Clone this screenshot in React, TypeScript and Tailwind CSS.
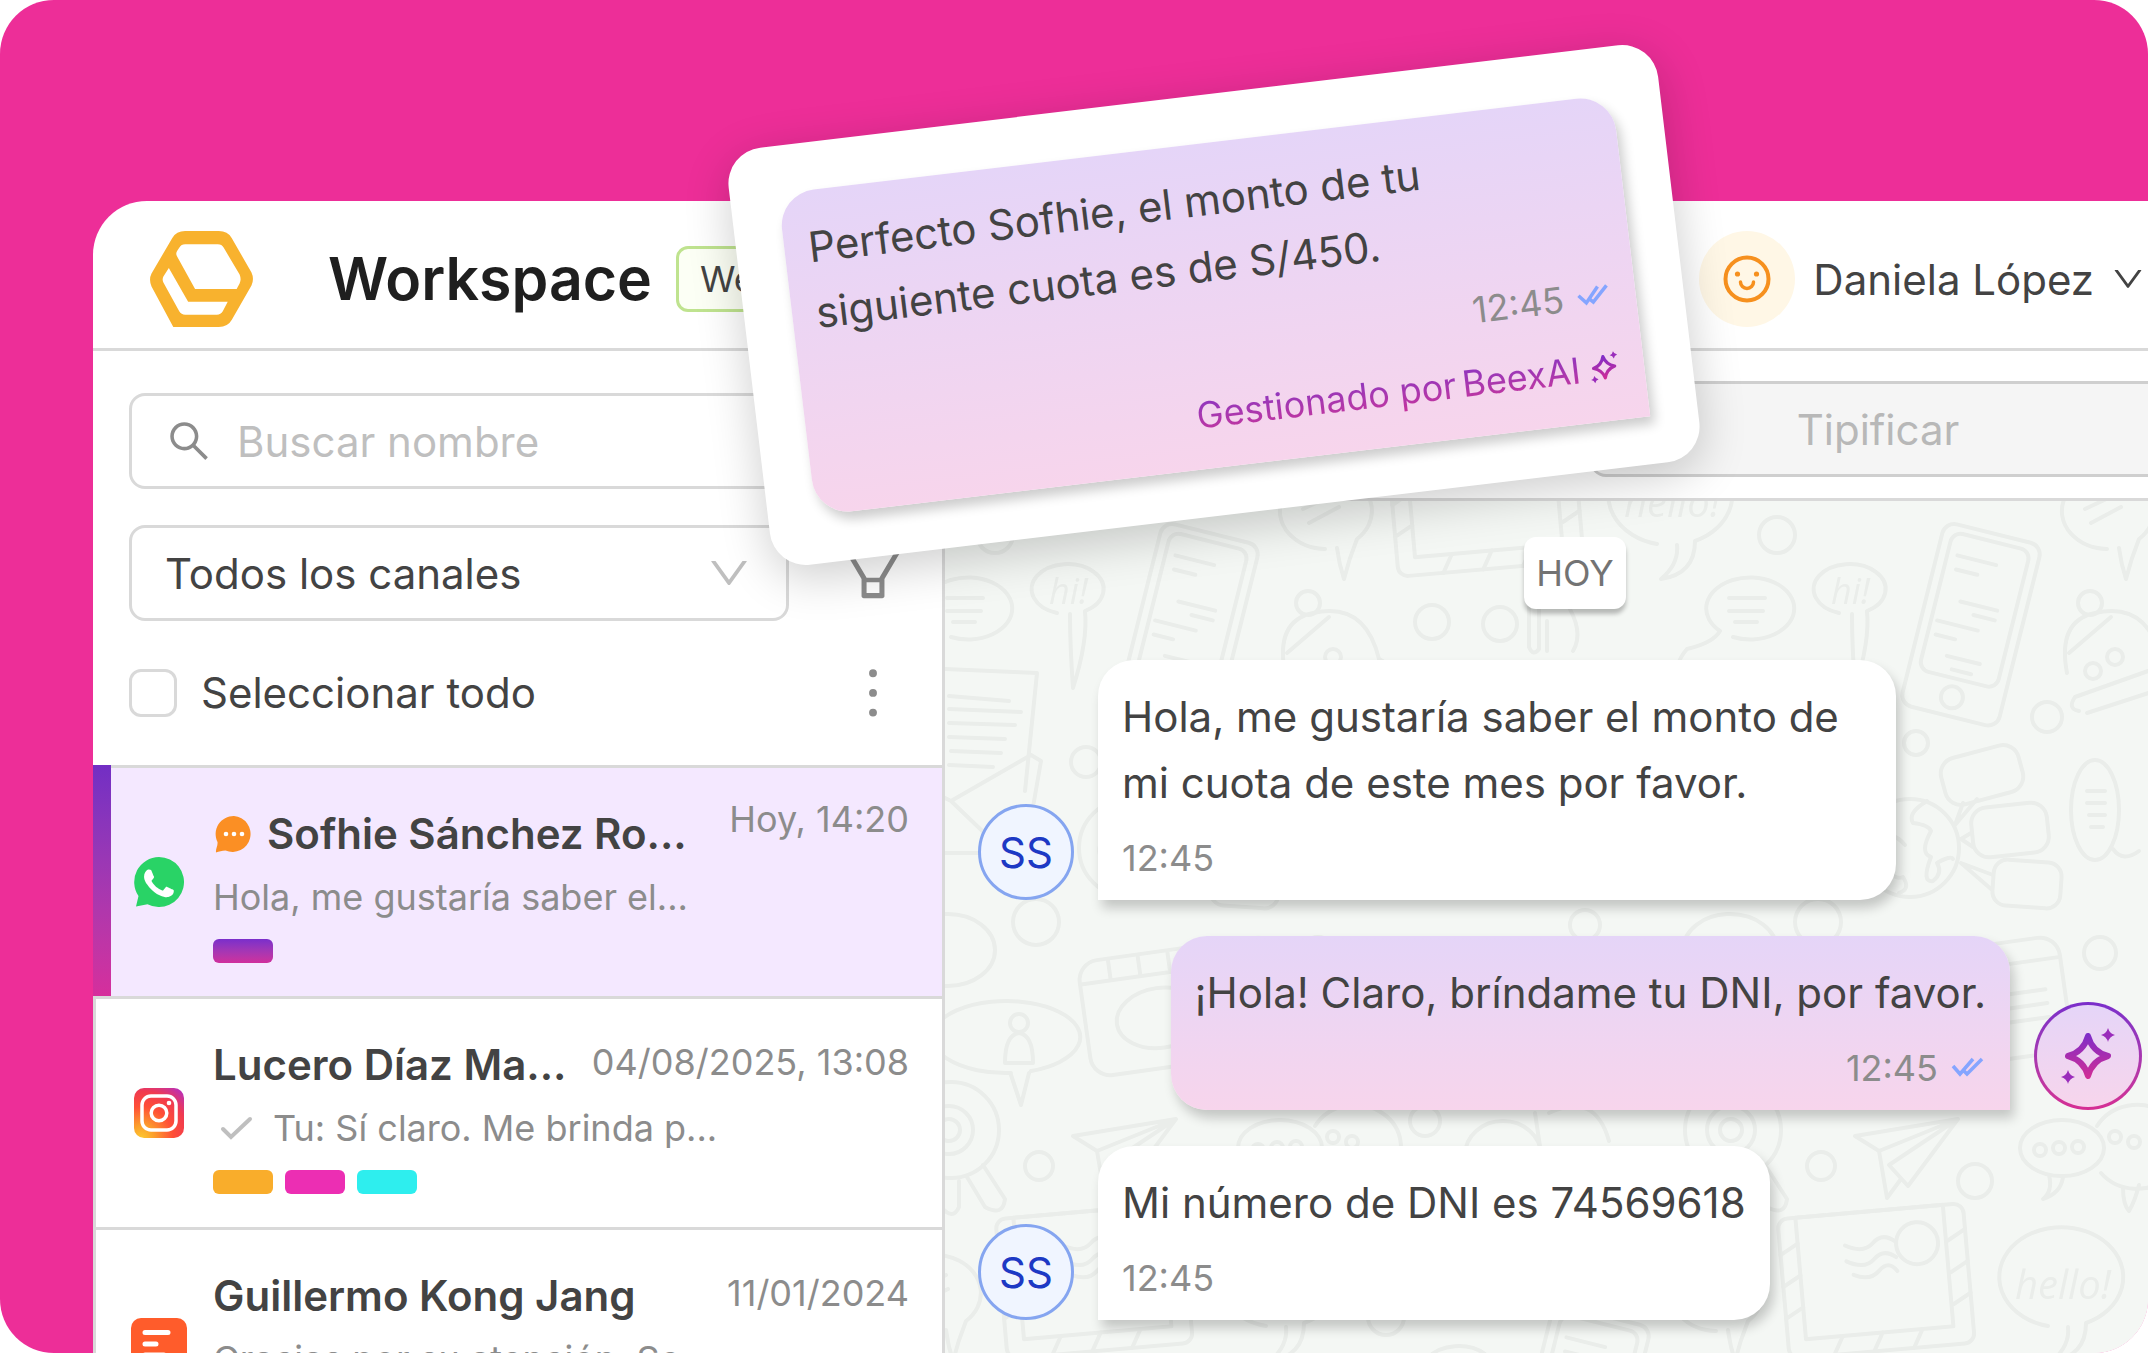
import type { ReactNode } from 'react';
import {
  AiOutlineDown,
  AiOutlineFilter,
  AiOutlineMore,
  AiOutlineSearch,
} from 'react-icons/ai';

interface Conversation {
  id: number;
  name: string;
  preview: string;
  date: string;
  channel: 'whatsapp' | 'instagram' | 'form';
  tags: string[];
  active?: boolean;
  sent?: boolean;
}

const conversations: Conversation[] = [
  {
    id: 1,
    name: 'Sofhie Sánchez Ro...',
    preview: 'Hola, me gustaría saber el...',
    date: 'Hoy, 14:20',
    channel: 'whatsapp',
    tags: ['bg-linear-to-b from-[#7a2dcb] to-[#d02e9c]'],
    active: true,
  },
  {
    id: 2,
    name: 'Lucero Díaz Ma...',
    preview: 'Tu: Sí claro. Me brinda p...',
    date: '04/08/2025, 13:08',
    channel: 'instagram',
    tags: ['bg-[#f9ad2b]', 'bg-[#ec2eb3]', 'bg-[#2eeeee]'],
    sent: true,
  },
  {
    id: 3,
    name: 'Guillermo Kong Jang',
    preview: 'Gracias por su atención. Se...',
    date: '11/01/2024',
    channel: 'form',
    tags: ['bg-[#f9ad2b]'],
  },
];

function Logo() {
  return (
    <svg viewBox="0 0 105 97" className="h-24 w-[105px] shrink-0" fill="#f8b22e">
      <path
        fillRule="evenodd"
        d="M36 0H70Q79 0 83 7L103 42Q106 48.500 103 55L83 90Q79 97 70 97H24L2 56Q-1 49 2 43L23 7Q27 0 36 0ZM36 13.500Q32 13.500 30 17L28 20Q26 23 28 26L46 58.500H88L91 53Q93 49 91 44L75 17Q73 13.500 69 13.500ZM19.500 37.500L14 46Q12.500 49 14 52L30 81Q32 84.500 36 84.500H68Q72 84.500 74 81L79 71.500H39Z"
      />
    </svg>
  );
}

function SmileIcon() {
  return (
    <svg viewBox="0 0 48 48" className="size-12" fill="none" stroke="#f6901e" strokeWidth="4" strokeLinecap="round">
      <circle cx="24" cy="24" r="21.500" />
      <path d="M17.500 27A6.500 6.500 0 0 0 30.500 27" strokeWidth="3.500" />
      <circle cx="14.500" cy="19" r="2.600" fill="#f6901e" stroke="none" />
      <circle cx="33.500" cy="19" r="2.600" fill="#f6901e" stroke="none" />
    </svg>
  );
}

function WhatsappIcon() {
  return (
    <svg viewBox="0 0 50 50" className="size-[50px]">
      <path d="M25 0a25 25 0 1 1-11.500 47.200L2 49.500 4.500 39A25 25 0 0 1 25 0Z" fill="#29d366" />
      <path
        transform="translate(-4.600 -7.400) scale(.132)"
        fill="#fff"
        d="M325.100 300.500c-5.500-2.800-32.800-16.200-37.900-18-5.100-1.900-8.800-2.800-12.500 2.800-3.700 5.600-14.300 18-17.600 21.800-3.200 3.700-6.500 4.200-12 1.400-32.600-16.300-54-29.100-75.500-66-5.700-9.800 5.700-9.100 16.300-30.300 1.800-3.700.9-6.900-.5-9.700-1.400-2.800-12.500-30.100-17.100-41.200-4.500-10.800-9.100-9.300-12.500-9.500-3.200-.2-6.900-.2-10.600-.2-3.700 0-9.700 1.400-14.800 6.900-5.100 5.600-19.400 19-19.400 46.300 0 27.300 19.900 53.700 22.600 57.400 2.800 3.700 39.100 59.700 94.800 83.800 35.200 15.200 49 16.500 66.600 13.900 10.700-1.600 32.800-13.400 37.400-26.400 4.600-13 4.600-24.100 3.200-26.400-1.300-2.500-5-3.900-10.500-6.600z"
      />
    </svg>
  );
}

function InstagramIcon() {
  return (
    <svg viewBox="0 0 50 50" className="size-[50px]" fill="none" stroke="#fff">
      <defs>
        <radialGradient id="insta" cx="0.15" cy="1" r="1.250">
          <stop offset="0" stopColor="#fdc82f" />
          <stop offset="0.2" stopColor="#fca02c" />
          <stop offset="0.5" stopColor="#ff4f36" />
          <stop offset="0.75" stopColor="#f03a50" />
          <stop offset="1" stopColor="#b72fbd" />
        </radialGradient>
      </defs>
      <rect width="50" height="50" rx="10" fill="url(#insta)" stroke="none" />
      <rect x="8" y="8" width="34" height="34" rx="9" strokeWidth="3.500" />
      <circle cx="25" cy="25" r="7.800" strokeWidth="3.500" />
      <circle cx="35" cy="15" r="2.300" fill="#fff" stroke="none" />
    </svg>
  );
}

function FormIcon() {
  return (
    <svg viewBox="0 0 56 56" className="size-14">
      <rect y="2" width="56" height="52" rx="10" fill="#ff5c2b" />
      <g stroke="#fff" strokeWidth="5" strokeLinecap="round">
        <path d="M14 16.500H37M14 28H25M14 39H33" />
      </g>
    </svg>
  );
}

function PendingIcon() {
  return (
    <svg viewBox="0 0 42 42" className="size-[42px] shrink-0">
      <path d="M21 3a18 18 0 1 1-8.500 34.500C9 37.500 6 38.500 3 39.500 2.500 36 5 33 4.500 29A18 18 0 0 1 21 3Z" fill="#fb8f24" />
      <g fill="#fff">
        <circle cx="13" cy="21" r="2.300" />
        <circle cx="21" cy="21" r="2.300" />
        <circle cx="29" cy="21" r="2.300" />
      </g>
    </svg>
  );
}

function DoubleCheck() {
  return (
    <svg viewBox="0 0 36 24" className="h-6 w-9" fill="none" stroke="#85a5ff" strokeWidth="3.500">
      <path d="M3 10L10 18 23 3M14 15L17 18 32 3" />
    </svg>
  );
}

function Sparkle({ id, className }: { id: string; className: string }) {
  return (
    <svg viewBox="0 0 60 60" className={className}>
      <defs>
        <linearGradient id={id} x1="0" y1="0" x2="0" y2="60" gradientUnits="userSpaceOnUse">
          <stop offset="0.1" stopColor="#7a2dcb" />
          <stop offset="0.9" stopColor="#d52d93" />
        </linearGradient>
      </defs>
      <path
        d="M30 10C33 21 39 27 50 30 39 33 33 39 30 50 27 39 21 33 10 30 21 27 27 21 30 10Z"
        fill="none"
        stroke={`url(#${id})`}
        strokeWidth="6"
        strokeLinejoin="round"
      />
      <path d="M50 2Q51.500 7.500 57 9 51.500 10.500 50 16 48.500 10.500 43 9 48.500 7.500 50 2Z" fill="#9a2dbb" />
      <path d="M10 44Q11.500 49.500 17 51 11.500 52.500 10 58 8.500 52.500 3 51 8.500 49.500 10 44Z" fill="#9a2dbb" />
    </svg>
  );
}

function Doodles() {
  return (
    <g fill="none" stroke="#eaedea" strokeWidth="4" strokeLinecap="round" strokeLinejoin="round">
      {/* speech bubbles */}
      <path d="M112 112A36 25 0 1 1 140 110Q143 140 128 187 125 145 125 113" />
      <path d="M775 130A44 31 0 1 1 788 136M775 130Q768 142 742 148 735 156 733 164" />
      <path d="M784 97H820M784 110H818M790 121H812" />
      <path d="M771 830A46 38 0 1 1 803 820Q795 840 790 860 785 845 783 829" />
      <path d="M749 790L783 774M755 804L785 788" />
      <path d="M321 825A62 50 0 1 1 359 822Q359 855 325 860 343 845 341 826" />
      <rect x="215" y="250" width="80" height="48" rx="16" transform="rotate(-15 255 274)" />
      <path d="M236 302L228 324 250 298" />
      <rect x="245" y="304" width="76" height="50" rx="16" transform="rotate(-6 283 329)" />
      <path d="M244 332L234 338 246 346" />
      <rect x="266" y="360" width="68" height="46" rx="14" transform="rotate(4 300 383)" />
      <path d="M266 374L234 362 264 388" />
      <ellipse cx="368" cy="309" rx="24" ry="50" />
      <path d="M360 290H378M360 302H378M362 314H378M364 326H376M386 348Q396 362 412 350" />
      <ellipse cx="785" cy="449" rx="47" ry="36" />
      <path d="M848 572A74 36 0 1 1 868 570M848 574L858 604 866 572" />
      <circle cx="856" cy="522" r="9" />
      <path d="M842 562Q842 534 856 532 870 534 870 562Z" />
      <ellipse cx="335" cy="647" rx="42" ry="28" />
      <path d="M322 674Q326 690 316 698 334 692 336 676M370 625A46 42 0 1 1 374 672M396 686Q396 704 402 710 408 700 412 684" />
      <circle cx="313" cy="649" r="6" />
      <circle cx="332" cy="647" r="6" />
      <circle cx="351" cy="646" r="6" />
      <circle cx="388" cy="636" r="6" />
      <circle cx="407" cy="641" r="6" />
      {/* phone */}
      <g transform="rotate(14 245 124)">
        <rect x="194" y="30" width="100" height="188" rx="12" />
        <rect x="204" y="38" width="80" height="142" rx="10" />
        <circle cx="243" cy="199" r="11" />
        <path d="M214 60H254M216 74H238M228 104H266M244 114H266M210 128H252M212 142H232M228 160H262M236 172H256" />
      </g>
      {/* envelopes */}
      <g transform="translate(-391 4) rotate(-5 539 774)">
        <rect x="447" y="706" width="186" height="140" rx="10" />
        <rect x="465" y="706" width="148" height="122" />
        <path d="M447 742L465 732M447 774L465 764M447 806L465 796M615 742L633 732M615 774L633 764M615 806L633 796M492 846L502 828M532 846L542 828M572 846L582 828" />
        <circle cx="584" cy="742" r="21" />
        <path d="M512 738Q530 748 540 738T562 738M512 754Q530 764 540 754T562 754M518 768Q534 776 544 766T562 768" />
      </g>
      <path d="M712 165L874 172 862 290M786 195L846 200M786 208L858 211M786 222L852 224M786 236L842 238M788 250L838 252M786 264L830 266M702 258L788 300 868 254M702 258V352H862L878 260 868 254M788 300L836 346" />
      {/* bear with a hat */}
      <path d="M340 172Q330 120 368 112 420 100 434 158 444 164 452 168M352 210Q340 208 348 196L438 164Q462 172 440 186L360 212M342 152L384 116" />
      <circle cx="363" cy="102" r="12" />
      <circle cx="366" cy="170" r="8" />
      <circle cx="388" cy="156" r="8" />
      <path d="M584 96V146Q588 156 594 148V98M602 150V120M620 100Q640 130 628 150M584 180A28 24 0 0 1 636 184" />
      {/* globe */}
      <circle cx="183" cy="347" r="49" />
      <path d="M200 300Q180 312 186 322 202 324 204 330 192 352 204 356 194 382 206 380 216 372 210 362 224 354 226 358M172 392Q184 388 176 376 166 380 160 364 150 350 158 338 166 330 178 344" />
      {/* wallet, card */}
      <g transform="rotate(-8 235 505)">
        <rect x="139" y="448" width="200" height="116" rx="20" />
        <path d="M140 470H339M170 450V468M200 450V468M230 450V468M280 500H320M280 514H320M280 528H320" />
        <ellipse cx="214" cy="514" rx="44" ry="30" />
      </g>
      {/* medal */}
      <circle cx="788" cy="629" r="48" />
      <circle cx="786" cy="629" r="24" />
      <circle cx="786" cy="629" r="11" />
      <path d="M804 676L822 706Q840 716 842 698L820 664M778 680V706Q790 720 796 706V680" />
      {/* paper plane */}
      <path d="M128 635L231 618 181 685 162 664 231 618 152 650M128 635L152 650 160 697 174 678" />
      <path d="M520 654A38 34 0 0 1 596 654M604 612Q650 590 664 640M590 612L596 652" />
      {/* loose circles */}
      <circle cx="50" cy="34" r="18" />
      <circle cx="487" cy="121" r="17" />
      <circle cx="555" cy="123" r="17" />
      <circle cx="320" cy="216" r="15" />
      <circle cx="189" cy="242" r="12" />
      <circle cx="141" cy="261" r="15" />
      <circle cx="91" cy="421" r="23" />
      <circle cx="94" cy="665" r="14" />
      <circle cx="248" cy="680" r="17" />
      <circle cx="373" cy="452" r="16" />
      <circle cx="480" cy="620" r="15" />
      <circle cx="640" cy="424" r="15" />
      <g fill="#eaedea" stroke="none" fontFamily="Open Sans, sans-serif" fontStyle="italic">
        <text x="104" y="103" fontSize="36">hi!</text>
        <text x="288" y="798" fontSize="40">hello!</text>
      </g>
    </g>
  );
}

function ChatBackground() {
  return (
    <svg className="absolute inset-0 h-full w-full" aria-hidden="true">
      <defs>
        <g id="doodles">
          <Doodles />
        </g>
        {/* every second row is shifted by half a tile */}
        <pattern id="wallpaper" width="782" height="1564" patternUnits="userSpaceOnUse">
          <use href="#doodles" />
          <use href="#doodles" x="-782" />
          <use href="#doodles" x="391" y="782" />
          <use href="#doodles" x="-391" y="782" />
          <use href="#doodles" x="-1173" y="782" />
          <use href="#doodles" x="391" y="-782" />
          <use href="#doodles" x="-391" y="-782" />
          <use href="#doodles" x="-1173" y="-782" />
        </pattern>
      </defs>
      <rect width="100%" height="100%" fill="url(#wallpaper)" />
    </svg>
  );
}

function ConversationItem({ item }: { item: Conversation }) {
  return (
    <li className={`flex ${item.active ? 'bg-[#f4e8ff]' : 'bg-white'}`}>
      <div
        className={`w-[18px] shrink-0 ${
          item.active
            ? 'bg-linear-to-b from-[#722ec4] to-[#d62e9c]'
            : 'border-t-3 border-l-3 border-[#d9d9d9]'
        }`}
      />
      <div className="flex min-w-0 flex-1 items-center border-t-3 border-[#d9d9d9] py-[33px] pr-[33px]">
        <div className="flex w-24 shrink-0 justify-center">
          {item.channel === 'whatsapp' && <WhatsappIcon />}
          {item.channel === 'instagram' && <InstagramIcon />}
          {item.channel === 'form' && <FormIcon />}
        </div>
        <div className="min-w-0 flex-1 pl-1.5">
          <div className="flex items-start justify-between whitespace-nowrap">
            <h2 className="flex items-center gap-3 text-[42px] leading-[66px] font-semibold text-[#434343]">
              {item.active && <PendingIcon />}
              {item.name}
            </h2>
            <time
              className={`text-4xl text-[#8c8c8c] ${
                item.active ? 'leading-9' : 'leading-[60px]'
              }`}
            >
              {item.date}
            </time>
          </div>
          <p className="flex items-center gap-3 text-4xl leading-[60px] whitespace-nowrap text-[#8c8c8c]">
            {item.sent && (
              <svg viewBox="0 0 48 48" className="size-12" fill="none" stroke="#bfbfbf" strokeWidth="4" strokeLinecap="round">
                <path d="M10 25L18 33 37 15" />
              </svg>
            )}
            {item.preview}
          </p>
          <div className="mt-3 flex gap-3">
            {item.tags.map((tag) => (
              <span key={tag} className={`h-6 w-[60px] rounded-md ${tag}`} />
            ))}
          </div>
        </div>
      </div>
    </li>
  );
}

function Sidebar() {
  return (
    <aside className="flex w-[852px] shrink-0 flex-col border-r-3 border-[#d9d9d9]">
      <div className="flex flex-col gap-9 pt-[42px] pr-[33px] pb-9 pl-9">
        <label className="flex h-24 items-center gap-6 rounded-2xl border-3 border-[#d9d9d9] px-[33px]">
          <AiOutlineSearch className="size-12 shrink-0 text-[#8c8c8c]" />
          <input
            type="search"
            aria-label="Buscar nombre"
            placeholder="Buscar nombre"
            className="min-w-0 flex-1 text-[42px] outline-none placeholder:text-[#bfbfbf]"
          />
        </label>
        <div className="flex h-24 items-center gap-12">
          <div className="relative flex-1">
            <select
              aria-label="Canal"
              className="block h-24 w-full appearance-none rounded-2xl border-3 border-[#d9d9d9] bg-white pl-[33px] text-[42px] text-[#434343]"
            >
              <option>Todos los canales</option>
            </select>
            <AiOutlineDown className="pointer-events-none absolute top-6 right-9 size-12 text-[#bfbfbf]" />
          </div>
          <button aria-label="Filtrar" className="text-[#8c8c8c]">
            <AiOutlineFilter className="size-[72px]" />
          </button>
        </div>
        <div className="flex h-[72px] items-center justify-between">
          <label className="flex items-center gap-6 text-[42px] leading-[72px] text-[#434343]">
            <input
              type="checkbox"
              className="size-12 appearance-none rounded-xl border-3 border-[#d9d9d9] bg-white"
            />
            Seleccionar todo
          </label>
          <button aria-label="Más opciones" className="text-[#8c8c8c]">
            <AiOutlineMore className="size-[72px]" />
          </button>
        </div>
      </div>
      <ul>
        {conversations.map((item) => (
          <ConversationItem key={item.id} item={item} />
        ))}
      </ul>
    </aside>
  );
}

interface MessageProps {
  children: ReactNode;
  outgoing?: boolean;
  time: string;
}

function Message({ children, outgoing, time }: MessageProps) {
  return (
    <div className={`flex items-end gap-6 ${outgoing ? 'justify-end' : ''}`}>
      {!outgoing && (
        <div className="flex size-24 shrink-0 items-center justify-center rounded-full border-3 border-[#85a5f0] bg-[#f0f5ff] text-[42px] text-[#1d39c4]">
          SS
        </div>
      )}
      <div
        className={`rounded-[36px] px-6 pt-6 pb-3 shadow-[4px_8px_12px_rgba(0,0,0,0.2)] ${
          outgoing
            ? 'max-w-[840px] rounded-br-none bg-linear-to-b from-[#e5d5f8] to-[#f7d5ec]'
            : 'max-w-[798px] rounded-bl-none bg-white'
        }`}
      >
        <p className="text-[42px] leading-[66px] text-[#434343]">{children}</p>
        <div
          className={`mt-3 flex items-center gap-3 text-4xl leading-[60px] text-[#8c8c8c] ${
            outgoing ? 'justify-end' : ''
          }`}
        >
          <time>{time}</time>
          {outgoing && <DoubleCheck />}
        </div>
      </div>
      {outgoing && (
        <div className="size-[108px] shrink-0 rounded-full bg-linear-to-b from-[#7a2dcb] to-[#d62e93] p-[3px]">
          <div className="flex size-full items-center justify-center rounded-full bg-linear-to-b from-[#e5d5f8] to-[#f7d5ec]">
            <Sparkle id="sparkle-avatar" className="size-[60px]" />
          </div>
        </div>
      )}
    </div>
  );
}

function Chat() {
  return (
    <section className="flex min-w-0 flex-1 flex-col">
      <div className="flex justify-end border-b-3 border-[#d9d9d9] pt-[30px] pr-[39px] pb-[21px]">
        <button
          disabled
          className="h-24 w-[576px] rounded-2xl border-3 border-[#cfcfcf] bg-[#f5f5f5] text-[42px] text-[#b8b8b8]"
        >
          Tipificar
        </button>
      </div>
      <div className="relative flex-1 bg-[#f4f7f4]">
        <ChatBackground />
        <div className="relative flex flex-col gap-9 pt-9 pr-[63px] pl-[33px]">
          <div className="mb-[15px] flex justify-center pl-[30px]">
            <span className="rounded-xl bg-white px-3 text-4xl leading-[72px] text-[#737373] shadow-[0_5px_4px_rgba(0,0,0,0.25)]">
              HOY
            </span>
          </div>
          <Message time="12:45">
            Hola, me gustaría saber el monto de mi cuota de este mes por favor.
          </Message>
          <Message time="12:45" outgoing>
            ¡Hola! Claro, bríndame tu DNI, por favor.
          </Message>
          <Message time="12:45">Mi número de DNI es 74569618</Message>
        </div>
      </div>
    </section>
  );
}

function FloatingMessage() {
  return (
    <div className="absolute top-[95px] left-[746px] w-[936px] rotate-[-6.8deg] rounded-[36px] bg-white p-12 shadow-[0_12px_48px_rgba(0,0,0,0.2)]">
      <div className="rounded-[36px] rounded-br-none bg-linear-to-b from-[#e5d5f8] to-[#f7d5ec] px-6 pt-6 pb-6 shadow-[4px_8px_12px_rgba(0,0,0,0.2)]">
        <p className="text-[42px] leading-[66px] text-[#434343]">
          Perfecto Sofhie, el monto de tu
          <br />
          siguiente cuota es de S/450.
        </p>
        <div className="mt-3 flex items-center justify-end gap-3 text-4xl leading-[60px] text-[#8c8c8c]">
          <time>12:45</time>
          <DoubleCheck />
        </div>
        <div className="mt-3 flex items-center justify-end text-4xl leading-[60px]">
          <span className="bg-linear-to-b from-[#7a2dcb] to-[#d52d93] bg-clip-text text-transparent">
            Gestionado por
          </span>
          <span className="ml-1.5 bg-linear-to-b from-[#7a2dcb] to-[#d52d93] bg-clip-text text-transparent">
            BeexAI
          </span>
          <Sparkle id="sparkle-card" className="ml-2 size-8" />
        </div>
      </div>
    </div>
  );
}

export default function App() {
  return (
    <div className="h-screen bg-white font-['Inter',sans-serif]">
      <main className="relative flex h-full overflow-hidden rounded-[54px] bg-[#ed2e98] pt-[201px] pl-[93px]">
        <div className="-mr-[57px] flex min-w-0 flex-1 flex-col overflow-hidden rounded-tl-[54px] bg-white">
          <header className="flex shrink-0 items-center border-b-3 border-[#d9d9d9] pt-[30px] pr-[63px] pb-[21px] pl-14">
            <Logo />
            <h1 className="ml-[74px] text-[59px] leading-[96px] font-semibold text-[#1f1f1f]">
              Workspace
            </h1>
            <span className="ml-6 flex h-[66px] items-center rounded-xl border-3 border-[#bfe38f] bg-[#fcfff5] px-[21px] text-4xl text-[#434343]">
              Web
            </span>
            <button className="ml-auto flex items-center text-[42px] text-[#434343]">
              <span className="mr-[18px] flex size-24 items-center justify-center rounded-full bg-[#fff7e6]">
                <SmileIcon />
              </span>
              Daniela López
              <AiOutlineDown className="-mr-1 ml-4 size-9" />
            </button>
          </header>
          <div className="flex min-h-0 flex-1">
            <Sidebar />
            <Chat />
          </div>
        </div>
        <FloatingMessage />
      </main>
    </div>
  );
}
